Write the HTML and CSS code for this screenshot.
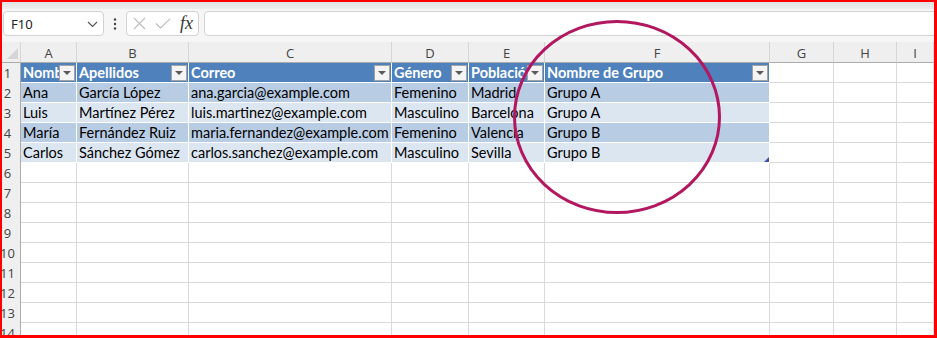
FILE: index.html
```html
<!DOCTYPE html>
<html lang="es">
<head>
<meta charset="utf-8">
<title>Hoja de cálculo</title>
<link rel="stylesheet" href="styles.css">
</head>
<body>
<div class="frame">
  <div class="ribbon-edge"></div>
  <div class="fbar">
    <div class="namebox">
      <span class="ref">F10</span>
      <svg class="chev" width="11" height="7" viewBox="0 0 11 7"><path d="M1 1 L5.5 5.5 L10 1" fill="none" stroke="#555" stroke-width="1.2"/></svg>
    </div>
    <div class="dots">
      <svg width="4" height="12" viewBox="0 0 4 12"><circle cx="2" cy="1.5" r="1.2" fill="#444"/><circle cx="2" cy="6" r="1.2" fill="#444"/><circle cx="2" cy="10.5" r="1.2" fill="#444"/></svg>
    </div>
    <div class="fxbox">
      <svg width="13" height="13" viewBox="0 0 13 13"><path d="M1 1 L12 12 M12 1 L1 12" fill="none" stroke="#bdbdbd" stroke-width="1.1"/></svg>
      <svg width="16" height="11" viewBox="0 0 16 11"><path d="M1 5.5 L5.5 10 L15 0.8" fill="none" stroke="#bdbdbd" stroke-width="1.1"/></svg>
      <span class="fx">fx</span>
    </div>
    <div class="finput"></div>
  </div>

  <div class="sheet">
    <div class="row hdr">
      <div class="corner"></div>
      <div class="ch">A</div><div class="ch">B</div><div class="ch">C</div><div class="ch">D</div><div class="ch">E</div><div class="ch">F</div><div class="ch">G</div><div class="ch">H</div><div class="ch">I</div>
    </div>
    <div class="row">
      <div class="rh">1</div>
      <div class="th"><span class="lbl">Nombre</span><span class="fb"></span></div>
      <div class="th"><span class="lbl">Apellidos</span><span class="fb"></span></div>
      <div class="th"><span class="lbl">Correo</span><span class="fb"></span></div>
      <div class="th"><span class="lbl">Género</span><span class="fb"></span></div>
      <div class="th"><span class="lbl">Población</span><span class="fb"></span></div>
      <div class="th"><span class="lbl">Nombre de Grupo</span><span class="fb"></span></div>
      <div class="c"></div><div class="c"></div><div class="c"></div>
    </div>
    <div class="row">
      <div class="rh">2</div>
      <div class="td dark">Ana</div><div class="td dark">García López</div><div class="td dark">ana.garcia@example.com</div><div class="td dark">Femenino</div><div class="td dark">Madrid</div><div class="td dark">Grupo A</div>
      <div class="c"></div><div class="c"></div><div class="c"></div>
    </div>
    <div class="row">
      <div class="rh">3</div>
      <div class="td light">Luis</div><div class="td light">Martínez Pérez</div><div class="td light">luis.martinez@example.com</div><div class="td light">Masculino</div><div class="td light">Barcelona</div><div class="td light">Grupo A</div>
      <div class="c"></div><div class="c"></div><div class="c"></div>
    </div>
    <div class="row">
      <div class="rh">4</div>
      <div class="td dark">María</div><div class="td dark">Fernández Ruiz</div><div class="td dark">maria.fernandez@example.com</div><div class="td dark">Femenino</div><div class="td dark">Valencia</div><div class="td dark">Grupo B</div>
      <div class="c"></div><div class="c"></div><div class="c"></div>
    </div>
    <div class="row">
      <div class="rh">5</div>
      <div class="td light">Carlos</div><div class="td light">Sánchez Gómez</div><div class="td light">carlos.sanchez@example.com</div><div class="td light">Masculino</div><div class="td light">Sevilla</div><div class="td light last">Grupo B</div>
      <div class="c"></div><div class="c"></div><div class="c"></div>
    </div>
    <div class="row"><div class="rh">6</div><div class="c"></div><div class="c"></div><div class="c"></div><div class="c"></div><div class="c"></div><div class="c"></div><div class="c"></div><div class="c"></div><div class="c"></div></div>
    <div class="row"><div class="rh">7</div><div class="c"></div><div class="c"></div><div class="c"></div><div class="c"></div><div class="c"></div><div class="c"></div><div class="c"></div><div class="c"></div><div class="c"></div></div>
    <div class="row"><div class="rh">8</div><div class="c"></div><div class="c"></div><div class="c"></div><div class="c"></div><div class="c"></div><div class="c"></div><div class="c"></div><div class="c"></div><div class="c"></div></div>
    <div class="row"><div class="rh">9</div><div class="c"></div><div class="c"></div><div class="c"></div><div class="c"></div><div class="c"></div><div class="c"></div><div class="c"></div><div class="c"></div><div class="c"></div></div>
    <div class="row"><div class="rh">10</div><div class="c"></div><div class="c"></div><div class="c"></div><div class="c"></div><div class="c"></div><div class="c"></div><div class="c"></div><div class="c"></div><div class="c"></div></div>
    <div class="row"><div class="rh">11</div><div class="c"></div><div class="c"></div><div class="c"></div><div class="c"></div><div class="c"></div><div class="c"></div><div class="c"></div><div class="c"></div><div class="c"></div></div>
    <div class="row"><div class="rh">12</div><div class="c"></div><div class="c"></div><div class="c"></div><div class="c"></div><div class="c"></div><div class="c"></div><div class="c"></div><div class="c"></div><div class="c"></div></div>
    <div class="row"><div class="rh">13</div><div class="c"></div><div class="c"></div><div class="c"></div><div class="c"></div><div class="c"></div><div class="c"></div><div class="c"></div><div class="c"></div><div class="c"></div></div>
    <div class="row"><div class="rh">14</div><div class="c"></div><div class="c"></div><div class="c"></div><div class="c"></div><div class="c"></div><div class="c"></div><div class="c"></div><div class="c"></div><div class="c"></div></div>
  </div>

  <svg class="mark" width="932" height="333" viewBox="0 0 932 333">
    <ellipse cx="615" cy="115" rx="102.5" ry="95.5" fill="none" stroke="#b2175f" stroke-width="3"/>
  </svg>
</div>
</body>
</html>
```

FILE: styles.css
```css
html, body {
  margin: 0;
  padding: 0;
}

body {
  width: 937px;
  height: 338px;
  overflow: hidden;
  background: #ffffff;
}

.frame {
  box-sizing: border-box;
  width: 937px;
  height: 338px;
  border-style: solid;
  border-color: #ff0000;
  border-width: 2px 3px 3px 2px;
  position: relative;
  overflow: hidden;
  background: #f5f5f5;
  display: flex;
  flex-direction: column;
}

.ribbon-edge {
  flex: none;
  height: 7px;
  background: linear-gradient(#e2e2e2, #eeeeee);
}

.fbar {
  flex: none;
  height: 33px;
  box-sizing: border-box;
  padding: 2px 0 0 1px;
  display: flex;
  align-items: flex-start;
  background: #f6f6f6;
}

.namebox {
  box-sizing: border-box;
  width: 101px;
  height: 25px;
  border: 1px solid #d2d2d2;
  border-radius: 4px;
  background: #ffffff;
  display: flex;
  align-items: center;
  justify-content: space-between;
  padding: 0 5px 0 7px;
}

.ref {
  font-family: "Noto Sans", "Open Sans", sans-serif;
  font-size: 13px;
  color: #222222;
}

.chev {
  display: block;
  margin-top: 1px;
}

.dots {
  width: 22px;
  height: 25px;
  display: flex;
  align-items: center;
  justify-content: center;
}

.dots svg {
  display: block;
}

.fxbox {
  box-sizing: border-box;
  width: 73px;
  height: 25px;
  border: 1px solid #d2d2d2;
  border-radius: 4px;
  background: #ffffff;
  display: flex;
  align-items: center;
  gap: 9px;
  padding-left: 6px;
}

.fxbox svg {
  display: block;
  flex: none;
}

.fx {
  font-family: "Liberation Serif", "DejaVu Serif", serif;
  font-style: italic;
  font-size: 18px;
  color: #333333;
  line-height: 1;
  margin-top: -2px;
}

.finput {
  flex: 1;
  height: 25px;
  box-sizing: border-box;
  margin-left: 5px;
  margin-right: -6px;
  border: 1px solid #d2d2d2;
  border-radius: 4px;
  background: #ffffff;
}

.sheet {
  flex: 1;
  background: #ffffff;
  font-family: "Lato", "Liberation Sans", sans-serif;
  font-size: 14.5px;
  color: #000000;
}

.row {
  display: grid;
  grid-template-columns: 19px 56px 112px 203px 77px 76px 225px 64px 63px 1fr;
  height: 20px;
}

.row.hdr {
  height: 21px;
}

.row > div {
  box-sizing: border-box;
  min-width: 0;
  overflow: hidden;
  white-space: nowrap;
}

.corner {
  position: relative;
  background: #efefef;
  border-right: 1px solid #d6d6d6;
  border-bottom: 1px solid #ababab;
}

.corner::after {
  content: "";
  position: absolute;
  right: 2px;
  bottom: 3px;
  width: 0;
  height: 0;
  border-left: 11px solid transparent;
  border-bottom: 11px solid #d6d6d6;
}

.ch {
  background: #efefef;
  border-right: 1px solid #d6d6d6;
  border-bottom: 1px solid #ababab;
  font-family: "Open Sans", "Noto Sans", sans-serif;
  font-size: 13px;
  color: #444444;
  display: flex;
  align-items: center;
  justify-content: center;
  padding-top: 2px;
}

.rh {
  background: #efefef;
  border-right: 1px solid #ababab;
  font-family: "Open Sans", "Noto Sans", sans-serif;
  font-size: 13px;
  color: #444444;
  display: flex;
  align-items: center;
  justify-content: center;
  padding-right: 7px;
  overflow: visible !important;
}

.c {
  border-right: 1px solid #dadada;
  border-bottom: 1px solid #dadada;
}

.th {
  background: #4f81bd;
  border-right: 1px solid #ffffff;
  border-bottom: 1px solid #ffffff;
  color: #ffffff;
  font-weight: 700;
  display: flex;
  align-items: center;
}

.lbl {
  flex: 1;
  min-width: 0;
  overflow: hidden;
  padding-left: 2px;
}

.fb {
  flex: none;
  position: relative;
  box-sizing: border-box;
  width: 16px;
  height: 16px;
  margin-right: 1px;
  background: #f4f4f4;
  border: 1px solid #a3a3a3;
}

.fb::after {
  content: "";
  position: absolute;
  left: 3px;
  top: 5px;
  width: 0;
  height: 0;
  border-left: 4px solid transparent;
  border-right: 4px solid transparent;
  border-top: 4px solid #5a5a5a;
}

.td {
  border-right: 1px solid #ffffff;
  border-bottom: 1px solid #ffffff;
  padding-left: 2px;
  display: flex;
  align-items: center;
}

.td.dark {
  background: #b8cce4;
}

.td.light {
  background: #dce6f1;
}

.td.last {
  position: relative;
}

.td.last::after {
  content: "";
  position: absolute;
  right: 0;
  bottom: 0;
  width: 0;
  height: 0;
  border-left: 5px solid transparent;
  border-bottom: 5px solid #3e4fae;
}

.mark {
  position: absolute;
  left: 0;
  top: 0;
  pointer-events: none;
}
```
